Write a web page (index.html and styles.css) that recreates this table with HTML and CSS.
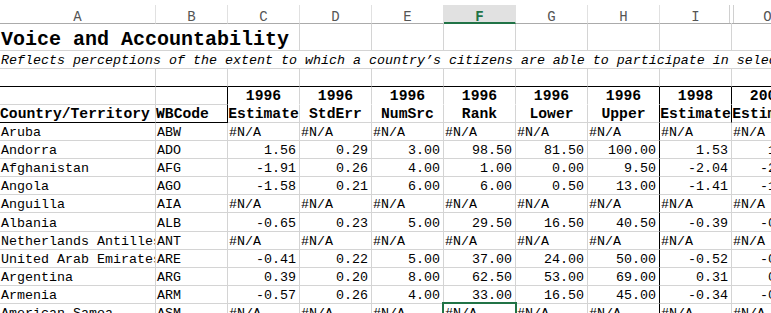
FILE: index.html
```html
<!DOCTYPE html>
<html>
<head>
<meta charset="utf-8">
<title>Voice and Accountability</title>
<link rel="stylesheet" href="styles.css">
</head>
<body>
<div class="sheet">
  <div class="ch">A</div><div class="ch">B</div><div class="ch">C</div><div class="ch">D</div><div class="ch">E</div><div class="ch sel">F</div><div class="ch">G</div><div class="ch">H</div><div class="ch ci">I</div><div class="ch co">O</div>

  <div class="c title">Voice and Accountability</div><div class="c"></div><div class="c"></div><div class="c"></div><div class="c"></div><div class="c"></div><div class="c"></div><div class="c"></div>

  <div class="c sub">Reflects perceptions of the extent to which a country’s citizens are able to participate in selecting their government, as well as freedom of expression, freedom of association, and a free media.</div>

  <div class="c bb"></div><div class="c bb"></div><div class="c bb"></div><div class="c bb"></div><div class="c bb"></div><div class="c bb"></div><div class="c bb"></div><div class="c bb"></div><div class="c bb"></div><div class="c bb"></div>

  <div class="c"></div><div class="c br"></div><div class="c hd nb">1996</div><div class="c hd nb">1996</div><div class="c hd nb">1996</div><div class="c hd nb">1996</div><div class="c hd nb">1996</div><div class="c hd nb br">1996</div><div class="c hd nb br">1998</div><div class="c hd nb">2000</div>

  <div class="c hd hl bb">Country/Territory</div><div class="c hd hl bb br">WBCode</div><div class="c hd">Estimate</div><div class="c hd">StdErr</div><div class="c hd">NumSrc</div><div class="c hd">Rank</div><div class="c hd">Lower</div><div class="c hd br">Upper</div><div class="c hd br">Estimate</div><div class="c hd">Estimate</div>

  <div class="c nm">Aruba</div><div class="c">ABW</div><div class="c">#N/A</div><div class="c">#N/A</div><div class="c">#N/A</div><div class="c">#N/A</div><div class="c">#N/A</div><div class="c br">#N/A</div><div class="c">#N/A</div><div class="c">#N/A</div>

  <div class="c nm">Andorra</div><div class="c">ADO</div><div class="c n">1.56</div><div class="c n">0.29</div><div class="c n">3.00</div><div class="c n">98.50</div><div class="c n">81.50</div><div class="c n br">100.00</div><div class="c n">1.53</div><div class="c n">1.49</div>

  <div class="c nm">Afghanistan</div><div class="c">AFG</div><div class="c n">-1.91</div><div class="c n">0.26</div><div class="c n">4.00</div><div class="c n">1.00</div><div class="c n">0.00</div><div class="c n br">9.50</div><div class="c n">-2.04</div><div class="c n">-2.01</div>

  <div class="c nm">Angola</div><div class="c">AGO</div><div class="c n">-1.58</div><div class="c n">0.21</div><div class="c n">6.00</div><div class="c n">6.00</div><div class="c n">0.50</div><div class="c n br">13.00</div><div class="c n">-1.41</div><div class="c n">-1.28</div>

  <div class="c nm">Anguilla</div><div class="c">AIA</div><div class="c">#N/A</div><div class="c">#N/A</div><div class="c">#N/A</div><div class="c">#N/A</div><div class="c">#N/A</div><div class="c br">#N/A</div><div class="c">#N/A</div><div class="c">#N/A</div>

  <div class="c nm">Albania</div><div class="c">ALB</div><div class="c n">-0.65</div><div class="c n">0.23</div><div class="c n">5.00</div><div class="c n">29.50</div><div class="c n">16.50</div><div class="c n br">40.50</div><div class="c n">-0.39</div><div class="c n">-0.10</div>

  <div class="c nm">Netherlands Antilles</div><div class="c">ANT</div><div class="c">#N/A</div><div class="c">#N/A</div><div class="c">#N/A</div><div class="c">#N/A</div><div class="c">#N/A</div><div class="c br">#N/A</div><div class="c">#N/A</div><div class="c">#N/A</div>

  <div class="c nm">United Arab Emirates</div><div class="c">ARE</div><div class="c n">-0.41</div><div class="c n">0.22</div><div class="c n">5.00</div><div class="c n">37.00</div><div class="c n">24.00</div><div class="c n br">50.00</div><div class="c n">-0.52</div><div class="c n">-0.61</div>

  <div class="c nm">Argentina</div><div class="c">ARG</div><div class="c n">0.39</div><div class="c n">0.20</div><div class="c n">8.00</div><div class="c n">62.50</div><div class="c n">53.00</div><div class="c n br">69.00</div><div class="c n">0.31</div><div class="c n">0.47</div>

  <div class="c nm">Armenia</div><div class="c">ARM</div><div class="c n">-0.57</div><div class="c n">0.26</div><div class="c n">4.00</div><div class="c n">33.00</div><div class="c n">16.50</div><div class="c n br">45.00</div><div class="c n">-0.34</div><div class="c n">-0.52</div>

  <div class="c nm">American Samoa</div><div class="c">ASM</div><div class="c">#N/A</div><div class="c">#N/A</div><div class="c">#N/A</div><div class="c cur">#N/A</div><div class="c">#N/A</div><div class="c br">#N/A</div><div class="c">#N/A</div><div class="c">#N/A</div>
</div>
</body>
</html>
```

FILE: styles.css
```css
html, body {
  margin: 0;
  padding: 0;
  overflow: hidden;
  background: #ffffff;
}

.sheet {
  display: grid;
  grid-template-columns: 156px repeat(9, 72px);
  grid-template-rows: 24px 27px 18px 18px 18px 18px repeat(11, 18.1px);
  width: 804px;
  font-family: "Liberation Mono", "DejaVu Sans Mono", monospace;
  font-size: 13.33px;
  color: #000;
}

/* column header letters */
.ch {
  box-sizing: border-box;
  margin-top: 5px;
  border-right: 1px solid #e1e1e1;
  border-bottom: 1px solid #ababab;
  display: flex;
  justify-content: center;
  align-items: flex-end;
  font-size: 14px;
  line-height: 12px;
  color: #555;
}

.ch.sel {
  background: #e1e1e1;
  border-bottom: 2px solid #217346;
  color: #217346;
  font-weight: bold;
  line-height: 10px;
}

.ch.ci {
  border-right-color: transparent;
  background: linear-gradient(to right, transparent 69px, #d0d0d0 69px, #d0d0d0 70px, transparent 70px);
}

.ch.co {
  background: linear-gradient(to right, transparent 1px, #d0d0d0 1px, #d0d0d0 2px, transparent 2px);
}

/* cells */
.c {
  box-sizing: border-box;
  min-width: 0;
  border-right: 1px solid #d4d4d4;
  border-bottom: 1px solid #d4d4d4;
  display: flex;
  align-items: flex-end;
  padding: 0 1px;
  line-height: 14px;
  white-space: nowrap;
}

.title {
  grid-column: span 3;
  font-size: 20px;
  font-weight: bold;
  line-height: 20px;
}

.sub {
  grid-column: span 10;
  border-right: none;
  font-style: italic;
  overflow: hidden;
}

.hd {
  justify-content: center;
  font-weight: bold;
  font-size: 14.7px;
  line-height: 15px;
}

.hd.hl {
  justify-content: flex-start;
  padding-left: 0;
}

.nb {
  border-bottom-color: transparent;
}

.bb {
  border-bottom-color: #000;
}

.br {
  border-right-color: #000;
}

.nm {
  overflow: hidden;
}

.n {
  justify-content: flex-end;
  padding-right: 3px;
}

.cur {
  position: relative;
}

.cur::after {
  content: "";
  position: absolute;
  left: -2px;
  top: -2px;
  width: 75px;
  height: 24px;
  box-sizing: border-box;
  border: 2px solid #217346;
}
```
